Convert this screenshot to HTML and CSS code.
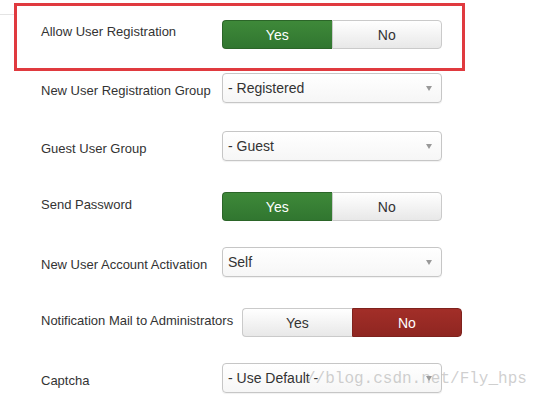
FILE: index.html
```html
<!DOCTYPE html>
<html>

<head>
	<meta charset="UTF-8">
	<title>Users Options</title>
	<link rel="stylesheet" href="styles.css">
</head>

<body>
	<div class="sheet">
		<div class="mark">
			<div class="row row-toggle">
				<label class="label">Allow User Registration</label>
				<div class="toggle">
					<span class="opt on-yes">Yes</span>
					<span class="opt">No</span>
				</div>
			</div>
		</div>

		<div class="row row-select row-first">
			<label class="label">New User Registration Group</label>
			<div class="select"><span>- Registered</span><i class="caret"></i></div>
		</div>

		<div class="row row-select">
			<label class="label">Guest User Group</label>
			<div class="select"><span>- Guest</span><i class="caret"></i></div>
		</div>

		<div class="row row-toggle">
			<label class="label">Send Password</label>
			<div class="toggle">
				<span class="opt on-yes">Yes</span>
				<span class="opt">No</span>
			</div>
		</div>

		<div class="row row-select">
			<label class="label">New User Account Activation</label>
			<div class="select"><span>Self</span><i class="caret"></i></div>
		</div>

		<div class="row row-toggle">
			<label class="label">Notification Mail to Administrators</label>
			<div class="toggle">
				<span class="opt">Yes</span>
				<span class="opt on-no">No</span>
			</div>
		</div>

		<div class="row row-select">
			<label class="label">Captcha</label>
			<div class="select"><span>- Use Default -</span><i class="caret"></i></div>
		</div>

		<div class="watermark">//blog.csdn.net/Fly_hps</div>
	</div>
</body>

</html>
```

FILE: styles.css
```css
html,
body {
	margin: 0;
	padding: 0;
	background: #fff;
	font-family: "Liberation Sans", Arial, sans-serif;
	font-size: 13px;
	color: #333;
}

.sheet {
	position: relative;
	width: 545px;
	height: 399px;
	padding-top: 3px;
	box-sizing: border-box;
	overflow: hidden;
}

/* bit of the fieldset rule peeking out left of the highlight */
.sheet::before {
	content: "";
	position: absolute;
	left: 0;
	top: 14px;
	width: 14px;
	height: 1px;
	background: #e4e4e4;
}

.mark {
	box-sizing: border-box;
	width: 451px;
	height: 68px;
	margin-left: 14px;
	padding: 11px 0 0 24px;
	border: 3px solid #e03a3f;
}

.row {
	display: flex;
	align-items: flex-start;
	padding-left: 41px;
}

.mark .row {
	padding-left: 0;
}

.row.row-first {
	margin-top: 2px;
}

.row-select + .row-select {
	margin-top: 28px;
}

.row-select + .row-toggle {
	margin-top: 28px;
}

.row-toggle + .row-select {
	margin-top: 26px;
}

.label {
	flex: none;
	min-width: 172px;
	margin-right: 9px;
	line-height: 18px;
	white-space: nowrap;
}

.row-select .label {
	padding-top: 9px;
}

.row-toggle .label {
	padding-top: 6px;
}

.sheet > .row-toggle .label {
	padding-top: 7px;
}

.row-toggle .toggle {
	margin-top: 3px;
}

.toggle {
	display: flex;
	width: 220px;
	height: 29px;
}

.opt {
	flex: 1;
	display: flex;
	align-items: center;
	justify-content: center;
	box-sizing: border-box;
	padding-top: 1px;
	border: 1px solid #cacaca;
	background: linear-gradient(#ffffff, #e8e8e8);
	font-size: 14px;
	color: #333;
}

.opt:first-child {
	border-radius: 4px 0 0 4px;
	border-right: none;
}

.opt:last-child {
	border-radius: 0 4px 4px 0;
}

.opt.on-yes {
	background: linear-gradient(#3e8939, #317630);
	border-color: #2b6528;
	color: #fff;
}

.opt.on-no {
	background: linear-gradient(#a22e28, #8f2621);
	border-color: #7e221d;
	color: #fff;
}

.select {
	display: flex;
	align-items: center;
	justify-content: space-between;
	box-sizing: border-box;
	width: 220px;
	height: 30px;
	padding: 0 9px 0 5px;
	border: 1px solid #c6c6c6;
	border-radius: 4px;
	background: linear-gradient(#ffffff, #f6f6f6);
	box-shadow: 0 1px 1px rgba(0, 0, 0, 0.06);
	font-size: 14px;
	color: #333;
}

.caret {
	width: 0;
	height: 0;
	border-left: 3px solid transparent;
	border-right: 3px solid transparent;
	border-top: 5px solid #999;
}

.watermark {
	position: absolute;
	left: 306px;
	top: 371px;
	font-family: "Liberation Mono", monospace;
	font-size: 16px;
	line-height: 16px;
	color: rgba(160, 160, 160, 0.5);
	white-space: nowrap;
}
```
